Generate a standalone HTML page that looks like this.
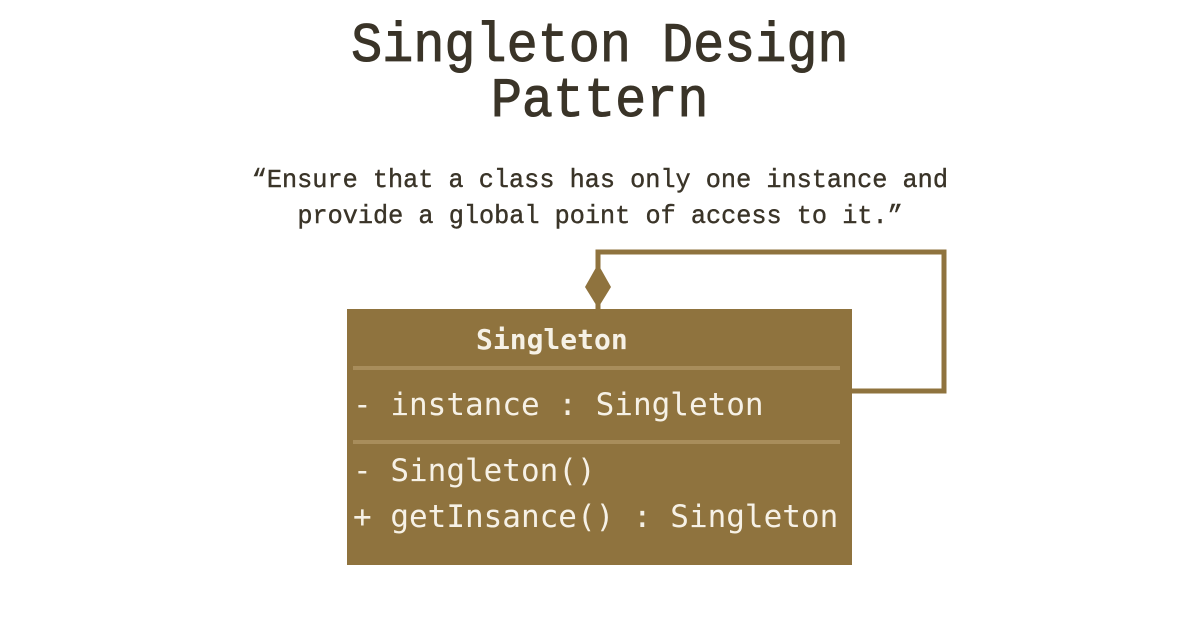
<!DOCTYPE html>
<html><head><meta charset="utf-8"><style>
body{margin:0;width:1200px;height:630px;background:#fff;position:relative;overflow:hidden}
.t{position:absolute;left:0;width:1200px;text-align:center;font-family:"Liberation Mono",monospace;color:#3a3428;white-space:nowrap}
.t span{display:inline-block}
.h{font-size:56px;line-height:56px;-webkit-text-stroke:1px #3a3428}
.h span{transform:scaleX(0.925)}
.q{font-size:26px;line-height:26px;-webkit-text-stroke:0.4px #3a3428}
.q span{transform:scaleX(0.97)}
.box{position:absolute;left:347px;top:309px;width:505px;height:256px;background:#8f733e;font-family:"DejaVu Sans Mono",monospace;color:#f6f1e6}
.box div{position:absolute;white-space:pre;left:6px}
.sep{position:absolute;left:8px;right:12px;height:4px;background:#a88d5b}
</style></head><body>
<div class="t h" style="top:18px"><span>Singleton Design</span></div>
<div class="t h" style="top:73px"><span>Pattern</span></div>
<div class="t q" style="top:167px"><span>“Ensure that a class has only one instance and</span></div>
<div class="t q" style="top:203px"><span>provide a global point of access to it.”</span></div>
<svg style="position:absolute;left:0;top:0" width="1200" height="630">
<path d="M598 309 L598 252 L944 252 L944 391 L852 391" fill="none" stroke="#8f733e" stroke-width="5"/>
<path d="M598 264 L611 287 L598 308 L585 287 Z" fill="#8f733e"/>
</svg>
<div class="box">
<div style="top:14px;left:129px;font-weight:bold;font-size:28px">Singleton</div>
<div class="sep" style="top:57px"></div>
<div style="top:78px;font-size:31px">- instance : Singleton</div>
<div class="sep" style="top:131px"></div>
<div style="top:144px;font-size:31px">- Singleton()</div>
<div style="top:190px;font-size:31px">+ getInsance() : Singleton</div>
</div>
</body></html>
